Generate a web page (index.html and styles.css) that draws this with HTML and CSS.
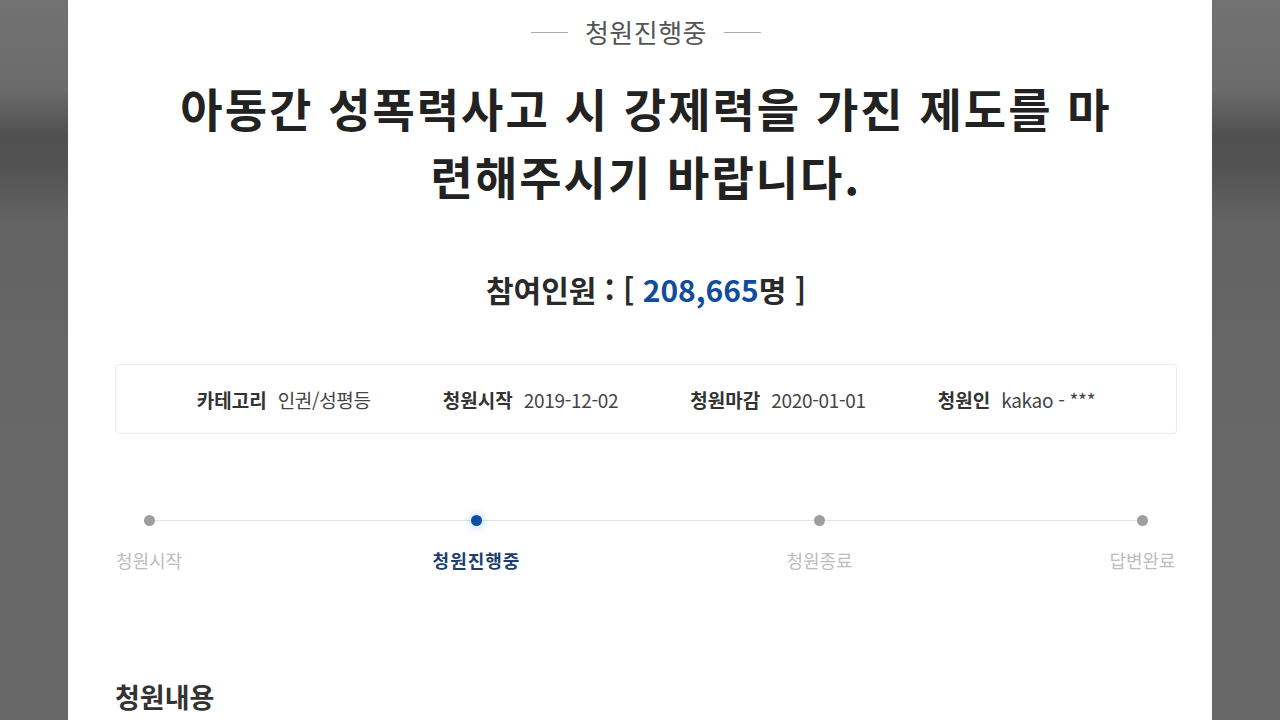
FILE: index.html
```html
<!DOCTYPE html>
<html lang="ko">
<head>
<meta charset="utf-8">
<title>청원진행중</title>
<link rel="stylesheet" href="styles.css">
</head>
<body>
<div class="page">
  <div class="status">청원진행중</div>
  <h1 class="title">아동간 성폭력사고 시 강제력을 가진 제도를 마련해주시기 바랍니다.</h1>
  <div class="count">참여인원 : [ <span class="num">208,665</span>명 ]</div>
  <div class="info">
    <div class="item"><span class="key">카테고리</span><span class="val">인권/성평등</span></div>
    <div class="item"><span class="key">청원시작</span><span class="val">2019-12-02</span></div>
    <div class="item"><span class="key">청원마감</span><span class="val">2020-01-01</span></div>
    <div class="item"><span class="key">청원인</span><span class="val">kakao - ***</span></div>
  </div>
  <div class="steps">
    <div class="step s1"><span class="dot"></span><span class="label">청원시작</span></div>
    <div class="step s2 active"><span class="dot"></span><span class="label">청원진행중</span></div>
    <div class="step s3"><span class="dot"></span><span class="label">청원종료</span></div>
    <div class="step s4"><span class="dot"></span><span class="label">답변완료</span></div>
  </div>
  <h2 class="section">청원내용</h2>
</div>
</body>
</html>
```

FILE: styles.css
```css
html, body {
  margin: 0;
  padding: 0;
}
body {
  width: 1280px;
  height: 720px;
  overflow: hidden;
  font-family: "Noto Sans CJK KR", "Noto Sans", sans-serif;
  background: linear-gradient(to bottom, #727272 0, #6b6b6b 90px, #505050 135px, #525252 165px, #636363 220px, #676767 400px, #686868 720px);
}
.page {
  margin: 0 68px;
  height: 720px;
  background: #fff;
  padding: 0 35px 0 47px;
  box-sizing: border-box;
}
.status {
  padding-top: 16px;
  font-size: 26px;
  line-height: 32px;
  color: #555;
  display: flex;
  justify-content: center;
  align-items: center;
  gap: 17px;
  letter-spacing: 0.5px;
}
.status::before, .status::after {
  content: "";
  width: 37px;
  height: 1px;
  background: #aaa;
}
.title {
  margin: 25px 0 0;
  padding: 0 45px;
  font-size: 46px;
  line-height: 68px;
  font-weight: 700;
  letter-spacing: 2px;
  color: #222;
  text-align: center;
}
.count {
  margin-top: 58px;
  font-size: 30px;
  line-height: 44px;
  font-weight: 700;
  color: #2a2a2a;
  text-align: center;
}
.num {
  color: #124c9a;
}
.info {
  margin-top: 53px;
  height: 70px;
  box-sizing: border-box;
  border: 1px solid #ececec;
  border-radius: 4px;
  display: flex;
  justify-content: center;
  align-items: center;
  gap: 72px;
  font-size: 19px;
}
.item {
  display: flex;
  align-items: center;
  gap: 11px;
}
.key {
  font-weight: 700;
  color: #333;
}
.val {
  color: #444;
  letter-spacing: -0.3px;
}
.steps {
  position: relative;
  margin-top: 81px;
  display: grid;
  grid-template-columns: 68px 250px 87px 266px 67px 255px 69px;
}
.steps::before {
  content: "";
  position: absolute;
  top: 5px;
  left: 33px;
  right: 35px;
  height: 1px;
  background: #e2e2e2;
}
.step {
  display: flex;
  flex-direction: column;
  align-items: center;
  position: relative;
}
.s1 { grid-column: 1; }
.s2 { grid-column: 3; }
.s3 { grid-column: 5; }
.s4 { grid-column: 7; }
.dot {
  width: 11px;
  height: 11px;
  border-radius: 50%;
  background: #9e9e9e;
}
.active .dot {
  background: #0b4ea2;
  box-shadow: 0 0 6px 3px rgba(90, 160, 255, 0.25);
}
.label {
  margin-top: 22px;
  font-size: 18px;
  line-height: 24px;
  color: #bdbdbd;
  white-space: nowrap;
}
.active .label {
  color: #1d3f6e;
  font-weight: 700;
  letter-spacing: 1px;
}
.section {
  margin: 109px 0 0;
  font-size: 27px;
  line-height: 32px;
  font-weight: 700;
  color: #333;
}
```
